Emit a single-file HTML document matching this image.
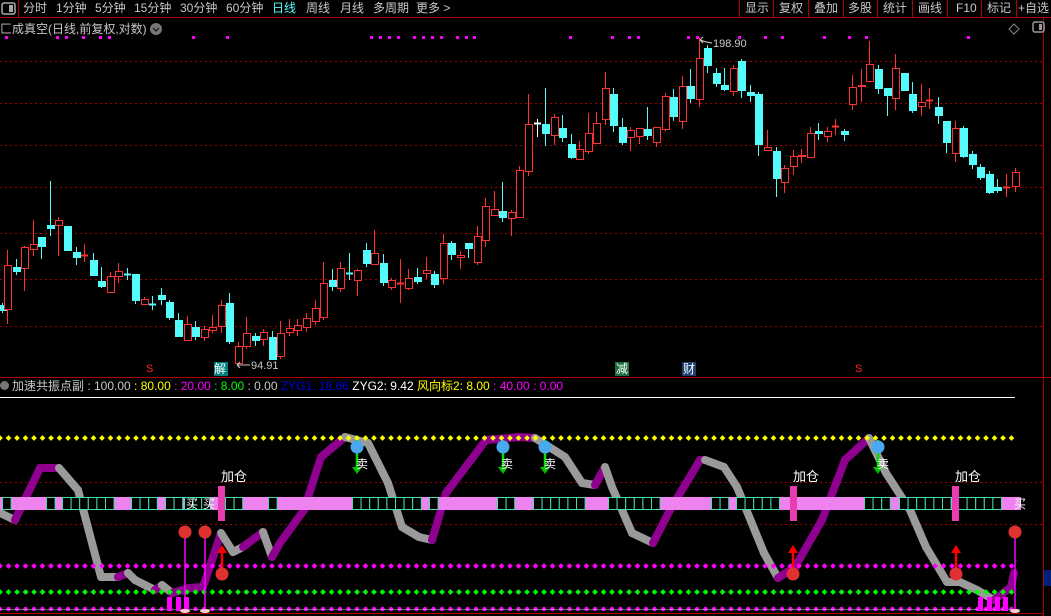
<!DOCTYPE html>
<html><head><meta charset="utf-8"><style>
*{margin:0;padding:0;box-sizing:border-box}
body{width:1051px;height:616px;background:#000;overflow:hidden;position:relative;font-family:"Liberation Sans","Noto Sans CJK SC",sans-serif;color:#c8c8c8}
.t{position:absolute;font-size:12px;line-height:14px;white-space:nowrap}
</style></head><body>
<svg id="s" width="1051" height="616" style="position:absolute;left:0;top:0" xmlns="http://www.w3.org/2000/svg">
<g stroke="#b00000" stroke-width="1">
<line x1="0" y1="17.5" x2="1051" y2="17.5"/>
<line x1="18.5" y1="0" x2="18.5" y2="17"/>
<line x1="739.5" y1="0" x2="739.5" y2="17"/><line x1="773.5" y1="0" x2="773.5" y2="17"/><line x1="808.5" y1="0" x2="808.5" y2="17"/><line x1="843.5" y1="0" x2="843.5" y2="17"/><line x1="877.5" y1="0" x2="877.5" y2="17"/><line x1="912.5" y1="0" x2="912.5" y2="17"/><line x1="947.5" y1="0" x2="947.5" y2="17"/><line x1="981.5" y1="0" x2="981.5" y2="17"/><line x1="1016.5" y1="0" x2="1016.5" y2="17"/>
<line x1="1043.5" y1="17" x2="1043.5" y2="616"/>
<line x1="0" y1="377.5" x2="1051" y2="377.5"/>
<line x1="0" y1="613.5" x2="1043" y2="613.5"/>
</g>
<rect x="2" y="3" width="13" height="11" rx="2" fill="none" stroke="#aaa" stroke-width="1.5"/><rect x="9" y="5" width="4" height="7" fill="#aaa"/>
<rect x="1033" y="22" width="11" height="10" rx="2" fill="none" stroke="#999" stroke-width="1.5"/><rect x="1039" y="24" width="3" height="6" fill="#999"/>
<path d="M1014 24 L1019 29 L1014 34 L1009 29 Z" fill="none" stroke="#888"/>
<circle cx="156" cy="29" r="6" fill="#777"/><path d="M153 28 L156 31 L159 28" stroke="#222" stroke-width="1.5" fill="none"/>
<g stroke="#a00000" stroke-dasharray="2,3" stroke-width="1" id="grid">
<line x1="0" y1="61.5" x2="1043" y2="61.5"/><line x1="0" y1="103.5" x2="1043" y2="103.5"/><line x1="0" y1="145.5" x2="1043" y2="145.5"/><line x1="0" y1="187.5" x2="1043" y2="187.5"/><line x1="0" y1="233.5" x2="1043" y2="233.5"/><line x1="0" y1="279.5" x2="1043" y2="279.5"/><line x1="0" y1="326.5" x2="1043" y2="326.5"/>
<line x1="0" y1="482.5" x2="1043" y2="482.5"/><line x1="0" y1="524.5" x2="1043" y2="524.5"/>
</g>
<g id="cand"></g>
<g id="mk" fill="#ff00ff"></g>
<path d="M700 40 L703 37 M700 40 L703 43 M700 40 Q705 42 712 43" stroke="#ccc" fill="none"/>
<path d="M237 365 L250 365 M237 365 L240 362 M237 365 L240 368" stroke="#ccc" fill="none"/>
<rect x="214" y="362" width="14" height="14" fill="#007f7f"/>
<rect x="615" y="362" width="14" height="14" fill="#1e6e3e"/>
<rect x="682" y="362" width="14" height="14" fill="#1e3e6e"/>
<line x1="0" y1="397.5" x2="1015" y2="397.5" stroke="#fff"/>
<g id="osc"></g>
<g id="band"></g>
<g id="dots"></g>
<g id="sig"></g>
<rect x="1044" y="570" width="7" height="16" fill="#002080"/>
</svg>
<div class="t" style="left:23px;top:1px">分时</div>
<div class="t" style="left:56px;top:1px">1分钟</div>
<div class="t" style="left:95px;top:1px">5分钟</div>
<div class="t" style="left:134px;top:1px">15分钟</div>
<div class="t" style="left:180px;top:1px">30分钟</div>
<div class="t" style="left:226px;top:1px">60分钟</div>
<div class="t" style="left:272px;top:1px;color:#54fcfc">日线</div>
<div class="t" style="left:306px;top:1px">周线</div>
<div class="t" style="left:340px;top:1px">月线</div>
<div class="t" style="left:373px;top:1px">多周期</div>
<div class="t" style="left:416px;top:1px">更多 &gt;</div>
<div class="t" style="left:745px;top:1px">显示</div>
<div class="t" style="left:779px;top:1px">复权</div>
<div class="t" style="left:814px;top:1px">叠加</div>
<div class="t" style="left:848px;top:1px">多股</div>
<div class="t" style="left:883px;top:1px">统计</div>
<div class="t" style="left:918px;top:1px">画线</div>
<div class="t" style="left:956px;top:1px">F10</div>
<div class="t" style="left:987px;top:1px">标记</div>
<div class="t" style="left:1018px;top:1px">+自选</div>
<div class="t" style="left:0;top:22px">匚成真空(日线,前复权,对数)</div>
<div class="t" style="left:713px;top:37px;font-size:11px">198.90</div>
<div class="t" style="left:251px;top:359px;font-size:11px">94.91</div>
<div class="t" style="left:146px;top:362px;color:#ff2020;font-size:11px">S</div>
<div class="t" style="left:855px;top:362px;color:#ff2020;font-size:11px">S</div>
<div class="t" style="left:214px;top:362px;color:#fff;font-size:12px">解</div>
<div class="t" style="left:616px;top:362px;color:#fff;font-size:12px">减</div>
<div class="t" style="left:683px;top:362px;color:#fff;font-size:12px">财</div>
<div class="t" style="left:0;top:379px"><span style="display:inline-block;width:9px;height:9px;border-radius:50%;background:#777;margin-right:3px"></span>加速共振点副 : 100.00 <span style="color:#ff0">: 80.00</span> <span style="color:#f0f">: 20.00</span> <span style="color:#0f0">: 8.00</span> : 0.00 <span style="color:#0000e0">ZYG1: 18.66</span> <span style="color:#fff">ZYG2: 9.42</span> <span style="color:#ff0">风向标2: 8.00</span> <span style="color:#f0f">: 40.00 : 0.00</span></div>
<div class="t" style="left:221px;top:470px;color:#fff;font-size:13px">加仓</div>
<div class="t" style="left:793px;top:470px;color:#fff;font-size:13px">加仓</div>
<div class="t" style="left:955px;top:470px;color:#fff;font-size:13px">加仓</div>
<div class="t" style="left:186px;top:497px;color:#fff">买</div>
<div class="t" style="left:203px;top:497px;color:#fff">买</div>
<div class="t" style="left:1014px;top:497px;color:#fff">买</div>
<div class="t" style="left:356px;top:457px;color:#fff">卖</div>
<div class="t" style="left:501px;top:457px;color:#fff">卖</div>
<div class="t" style="left:544px;top:457px;color:#fff">卖</div>
<div class="t" style="left:877px;top:457px;color:#fff">卖</div>
<script>
var NS="http://www.w3.org/2000/svg";
function el(p,t,a){var e=document.createElementNS(NS,t);for(var k in a)e.setAttribute(k,a[k]);p.appendChild(e);return e;}
var C=[[2,305,311,303,313,'c'],[7,265,310,250,324,'r'],[16,267,272,259,275,'c'],[24,247,269,246,291,'r'],[33,244,250,220,256,'r'],[41,237,247,237,259,'c'],[50,225,229,181,236,'c'],[58,220,226,217,256,'r'],[67,226,251,226,251,'c'],[76,252,258,247,265,'c'],[84,255,256,244,262,'r'],[93,260,276,253,276,'c'],[101,281,287,267,288,'c'],[110,276,293,272,293,'r'],[118,271,277,263,283,'r'],[127,274,275,268,280,'c'],[135,274,301,274,304,'c'],[144,299,305,297,305,'r'],[152,304,305,296,310,'c'],[161,295,300,288,305,'c'],[169,302,318,300,320,'c'],[178,320,337,313,337,'c'],[187,324,341,316,341,'r'],[195,327,337,321,340,'c'],[204,329,338,326,341,'r'],[212,327,331,315,333,'r'],[221,305,327,300,333,'r'],[229,303,342,293,344,'c'],[238,346,364,342,364,'r'],[246,333,347,317,349,'r'],[255,336,341,333,346,'c'],[263,332,340,329,346,'r'],[272,337,360,331,360,'c'],[280,333,357,321,359,'r'],[289,328,333,319,336,'r'],[297,325,331,319,336,'r'],[306,318,328,313,332,'r'],[315,308,322,300,325,'r'],[323,283,318,262,320,'r'],[332,280,287,269,291,'c'],[340,268,289,262,292,'r'],[349,273,274,253,280,'c'],[357,270,281,269,296,'r'],[366,250,264,243,267,'c'],[374,253,265,230,265,'r'],[383,263,283,254,286,'c'],[391,280,288,278,290,'r'],[400,283,284,259,303,'r'],[408,278,289,269,290,'r'],[417,277,282,268,284,'c'],[426,270,274,257,279,'r'],[434,274,285,271,288,'c'],[443,243,279,234,284,'r'],[451,243,255,241,260,'c'],[460,255,258,251,269,'r'],[468,243,249,243,258,'c'],[477,236,263,226,265,'r'],[485,206,241,198,247,'r'],[494,209,216,191,216,'r'],[502,211,218,182,222,'c'],[511,212,219,210,236,'r'],[519,170,218,166,218,'r'],[528,124,172,94,176,'r'],[537,123,124,119,137,'w'],[545,124,134,88,146,'c'],[554,117,136,114,145,'r'],[562,128,138,115,142,'c'],[571,144,158,134,159,'c'],[579,149,160,141,160,'r'],[588,133,152,113,154,'r'],[596,123,144,112,144,'r'],[605,88,120,72,125,'r'],[613,94,126,88,132,'c'],[622,127,143,118,145,'c'],[630,130,138,127,151,'r'],[639,128,137,128,144,'r'],[647,129,136,107,140,'c'],[656,127,143,127,147,'r'],[665,96,130,93,131,'r'],[673,97,117,89,121,'c'],[682,86,122,76,129,'r'],[690,86,99,69,103,'c'],[699,58,100,38,107,'r'],[707,48,66,45,73,'c'],[716,73,84,68,87,'c'],[724,85,90,68,91,'c'],[733,68,92,65,96,'r'],[741,61,91,59,98,'c'],[750,92,96,85,102,'c'],[758,94,145,92,156,'c'],[767,147,151,130,151,'r'],[776,151,179,147,197,'c'],[784,168,183,165,193,'r'],[793,156,167,150,175,'r'],[801,155,157,149,163,'r'],[810,133,158,127,158,'r'],[818,131,134,123,140,'c'],[827,131,137,127,142,'r'],[835,126,127,119,135,'r'],[844,131,135,129,141,'c'],[852,87,105,75,110,'r'],[861,85,87,69,102,'r'],[869,64,82,41,82,'r'],[878,69,89,65,94,'c'],[887,88,96,88,116,'c'],[895,68,99,54,110,'r'],[904,73,91,73,91,'c'],[912,94,111,82,113,'c'],[921,102,107,84,116,'r'],[929,100,101,88,109,'r'],[938,107,116,97,124,'c'],[946,121,143,121,153,'c'],[955,128,154,121,162,'r'],[963,128,157,126,158,'c'],[972,154,165,151,169,'c'],[980,167,178,164,180,'c'],[989,174,193,171,194,'c'],[997,187,191,179,193,'c'],[1006,187,188,174,197,'r'],[1015,172,187,168,192,'r']];
var g=document.getElementById('cand');
C.forEach(function(c){var col=c[5]=='r'?'#ff3232':c[5]=='c'?'#54fcfc':'#fff';var x=c[0];
el(g,'line',{x1:x+.5,x2:x+.5,y1:c[3],y2:c[4],stroke:col});
if(c[2]-c[1]<2){el(g,'line',{x1:x-3,x2:x+4,y1:c[1]+.5,y2:c[1]+.5,stroke:col,'stroke-width':2});}
else if(c[5]=='r')el(g,'rect',{x:x-2.5,y:c[1]+.5,width:7,height:c[2]-c[1]-1,fill:'#000',stroke:col});
else el(g,'rect',{x:x-3,y:c[1],width:8,height:c[2]-c[1],fill:col});});
var mk=document.getElementById('mk');
[6,57,66,83,100,109,193,227,371,380,389,398,414,423,432,441,457,466,474,570,612,629,638,688,697,739,765,782,824,849,866,968].forEach(function(x){el(mk,'rect',{x:x-1,y:36,width:3,height:3});});
// oscillator
var P=[[0,513,'g'],[15,520,'g'],[40,468,'p'],[59,468,'p'],[78,490,'g'],[101,577,'g'],[118,577,'g'],[128,573,'p'],[135,580,'g'],[155,590,'g'],[162,585,'p'],[172,593,'g'],[189,588,'p'],[203,587,'p'],[221,533,'p'],[233,552,'g'],[243,547,'g'],[263,532,'p'],[272,557,'g'],[280,543,'p'],[304,510,'p'],[321,457,'p'],[345,437,'p'],[368,443,'g'],[388,483,'g'],[402,527,'g'],[419,537,'g'],[432,540,'g'],[446,493,'p'],[486,440,'p'],[520,437,'p'],[535,438,'p'],[565,457,'g'],[582,483,'g'],[595,485,'g'],[605,467,'p'],[612,487,'g'],[632,533,'g'],[653,543,'g'],[670,510,'p'],[700,460,'p'],[705,460,'p'],[724,467,'g'],[737,487,'g'],[764,553,'g'],[778,578,'g'],[795,567,'p'],[822,520,'p'],[845,460,'p'],[869,438,'p'],[886,473,'g'],[910,510,'g'],[926,547,'g'],[947,582,'g'],[960,582,'g'],[977,590,'g'],[994,600,'g'],[1011,587,'p'],[1014,573,'p']];
var og=document.getElementById('osc');
for(var i=1;i<P.length;i++){el(og,'line',{x1:P[i-1][0],y1:P[i-1][1],x2:P[i][0],y2:P[i][1],stroke:P[i][2]=='p'?'#900090':'#9a9a9a','stroke-width':8,'stroke-linecap':'round'});}
// band
var bg=document.getElementById('band');
el(bg,'rect',{x:0,y:497,width:1021,height:13,fill:'#ee82ee'});
var cells=[[2,1],[46,1],[62,6],[131,3],[165,2],[184,3],[225,2],[268,1],[352,8],[429,1],[497,2],[533,6],[608,6],[711,2],[736,5],[864,3],[899,6],[958,5]];
cells.forEach(function(c){for(var k=0;k<c[1];k++)el(bg,'rect',{x:c[0]+k*8.6+.5,y:497.5,width:8.6,height:12,fill:'#000',stroke:'#40e0b0'});});
[218,790,952].forEach(function(x){el(bg,'rect',{x:x,y:486,width:7,height:35,fill:'#e83cb0'});});
// dots
var dg=document.getElementById('dots');
for(var x=0;x<1015;x+=8.5){el(dg,'rect',{x:x-2,y:436,width:4,height:4,fill:'#ff0',transform:'rotate(45 '+x+' 438)'});
el(dg,'rect',{x:x-2,y:564,width:4,height:4,fill:'#f0f',transform:'rotate(45 '+x+' 566)'});
el(dg,'rect',{x:x-2,y:590,width:4,height:4,fill:'#0f0',transform:'rotate(45 '+x+' 592)'});
el(dg,'circle',{cx:x,cy:609,r:2.2,fill:'#f0f'});}
el(dg,'line',{x1:0,y1:609.5,x2:1020,y2:609.5,stroke:'#ccc','stroke-width':0.6});
var sg=document.getElementById('sig');
[167,176,184,978,987,995,1003].forEach(function(x){el(sg,'rect',{x:x,y:597,width:5,height:14,fill:'#f0f'});});
[185,205,1015].forEach(function(x){el(sg,'line',{x1:x,y1:532,x2:x,y2:609,stroke:'#f0f','stroke-width':1.5});el(sg,'circle',{cx:x,cy:532,r:6.5,fill:'#e03030'});el(sg,'ellipse',{cx:x,cy:611,rx:5,ry:2,fill:'#fcc'});});
[222,793,956].forEach(function(x){el(sg,'line',{x1:x,y1:552,x2:x,y2:568,stroke:'#f00','stroke-width':2.5});el(sg,'path',{d:'M'+(x-5)+' 553 L'+x+' 545 L'+(x+5)+' 553Z',fill:'#f00'});el(sg,'circle',{cx:x,cy:574,r:6.5,fill:'#e03030'});});
[357,503,545,878].forEach(function(x){el(sg,'line',{x1:x,y1:440,x2:x,y2:467,stroke:'#00e000','stroke-width':2.5});el(sg,'path',{d:'M'+(x-5)+' 467 L'+x+' 474 L'+(x+5)+' 467Z',fill:'#00c000'});el(sg,'circle',{cx:x,cy:447,r:6.5,fill:'#4aa8f0'});});
</script>
</body></html>
